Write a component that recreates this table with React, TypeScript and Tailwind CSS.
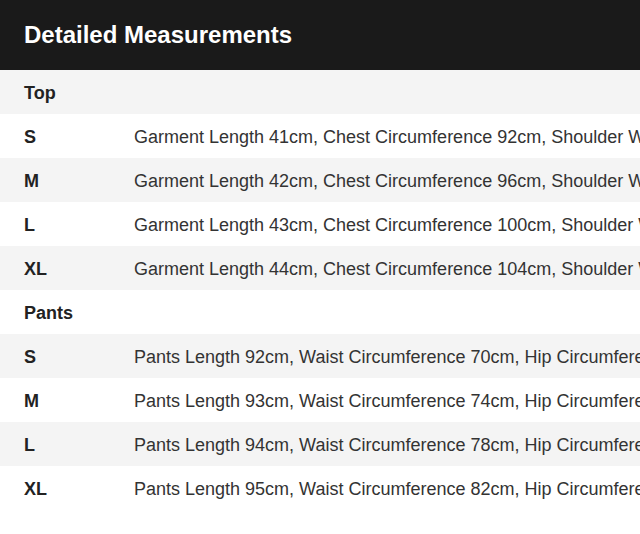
const sections = [
  {
    title: "Top",
    rows: [
      ["S", "Garment Length 41cm, Chest Circumference 92cm, Shoulder Width 38cm, Sleeve Length 58cm"],
      ["M", "Garment Length 42cm, Chest Circumference 96cm, Shoulder Width 39cm, Sleeve Length 59cm"],
      ["L", "Garment Length 43cm, Chest Circumference 100cm, Shoulder Width 40cm, Sleeve Length 60cm"],
      ["XL", "Garment Length 44cm, Chest Circumference 104cm, Shoulder Width 41cm, Sleeve Length 61cm"],
    ],
  },
  {
    title: "Pants",
    rows: [
      ["S", "Pants Length 92cm, Waist Circumference 70cm, Hip Circumference 96cm"],
      ["M", "Pants Length 93cm, Waist Circumference 74cm, Hip Circumference 100cm"],
      ["L", "Pants Length 94cm, Waist Circumference 78cm, Hip Circumference 104cm"],
      ["XL", "Pants Length 95cm, Waist Circumference 82cm, Hip Circumference 108cm"],
    ],
  },
]

export default function App() {
  let i = 0
  const rows: { label: string; text?: string; heading: boolean; idx: number }[] = []
  sections.forEach((s) => {
    rows.push({ label: s.title, heading: true, idx: i++ })
    s.rows.forEach(([label, text]) => rows.push({ label, text, heading: false, idx: i++ }))
  })

  return (
    <div className="w-[640px] min-h-[534px] overflow-hidden bg-white font-['Liberation_Sans',Arial,sans-serif]">
      <div className="h-[70px] bg-[#1a1a1a] flex items-center px-6">
        <h1 className="text-[24px] font-bold text-white">Detailed Measurements</h1>
      </div>
      <div>
        {rows.map((r) => (
          <div
            key={r.idx}
            className={`h-[44px] pt-[3px] flex items-center whitespace-nowrap ${r.idx % 2 === 0 ? "bg-[#f4f4f4]" : "bg-white"}`}
          >
            <div className="w-[134px] shrink-0 pl-6 text-[18px] font-bold text-[#222222]">{r.label}</div>
            {r.text && <div className="text-[18px] text-[#333333]">{r.text}</div>}
          </div>
        ))}
      </div>
    </div>
  )
}
